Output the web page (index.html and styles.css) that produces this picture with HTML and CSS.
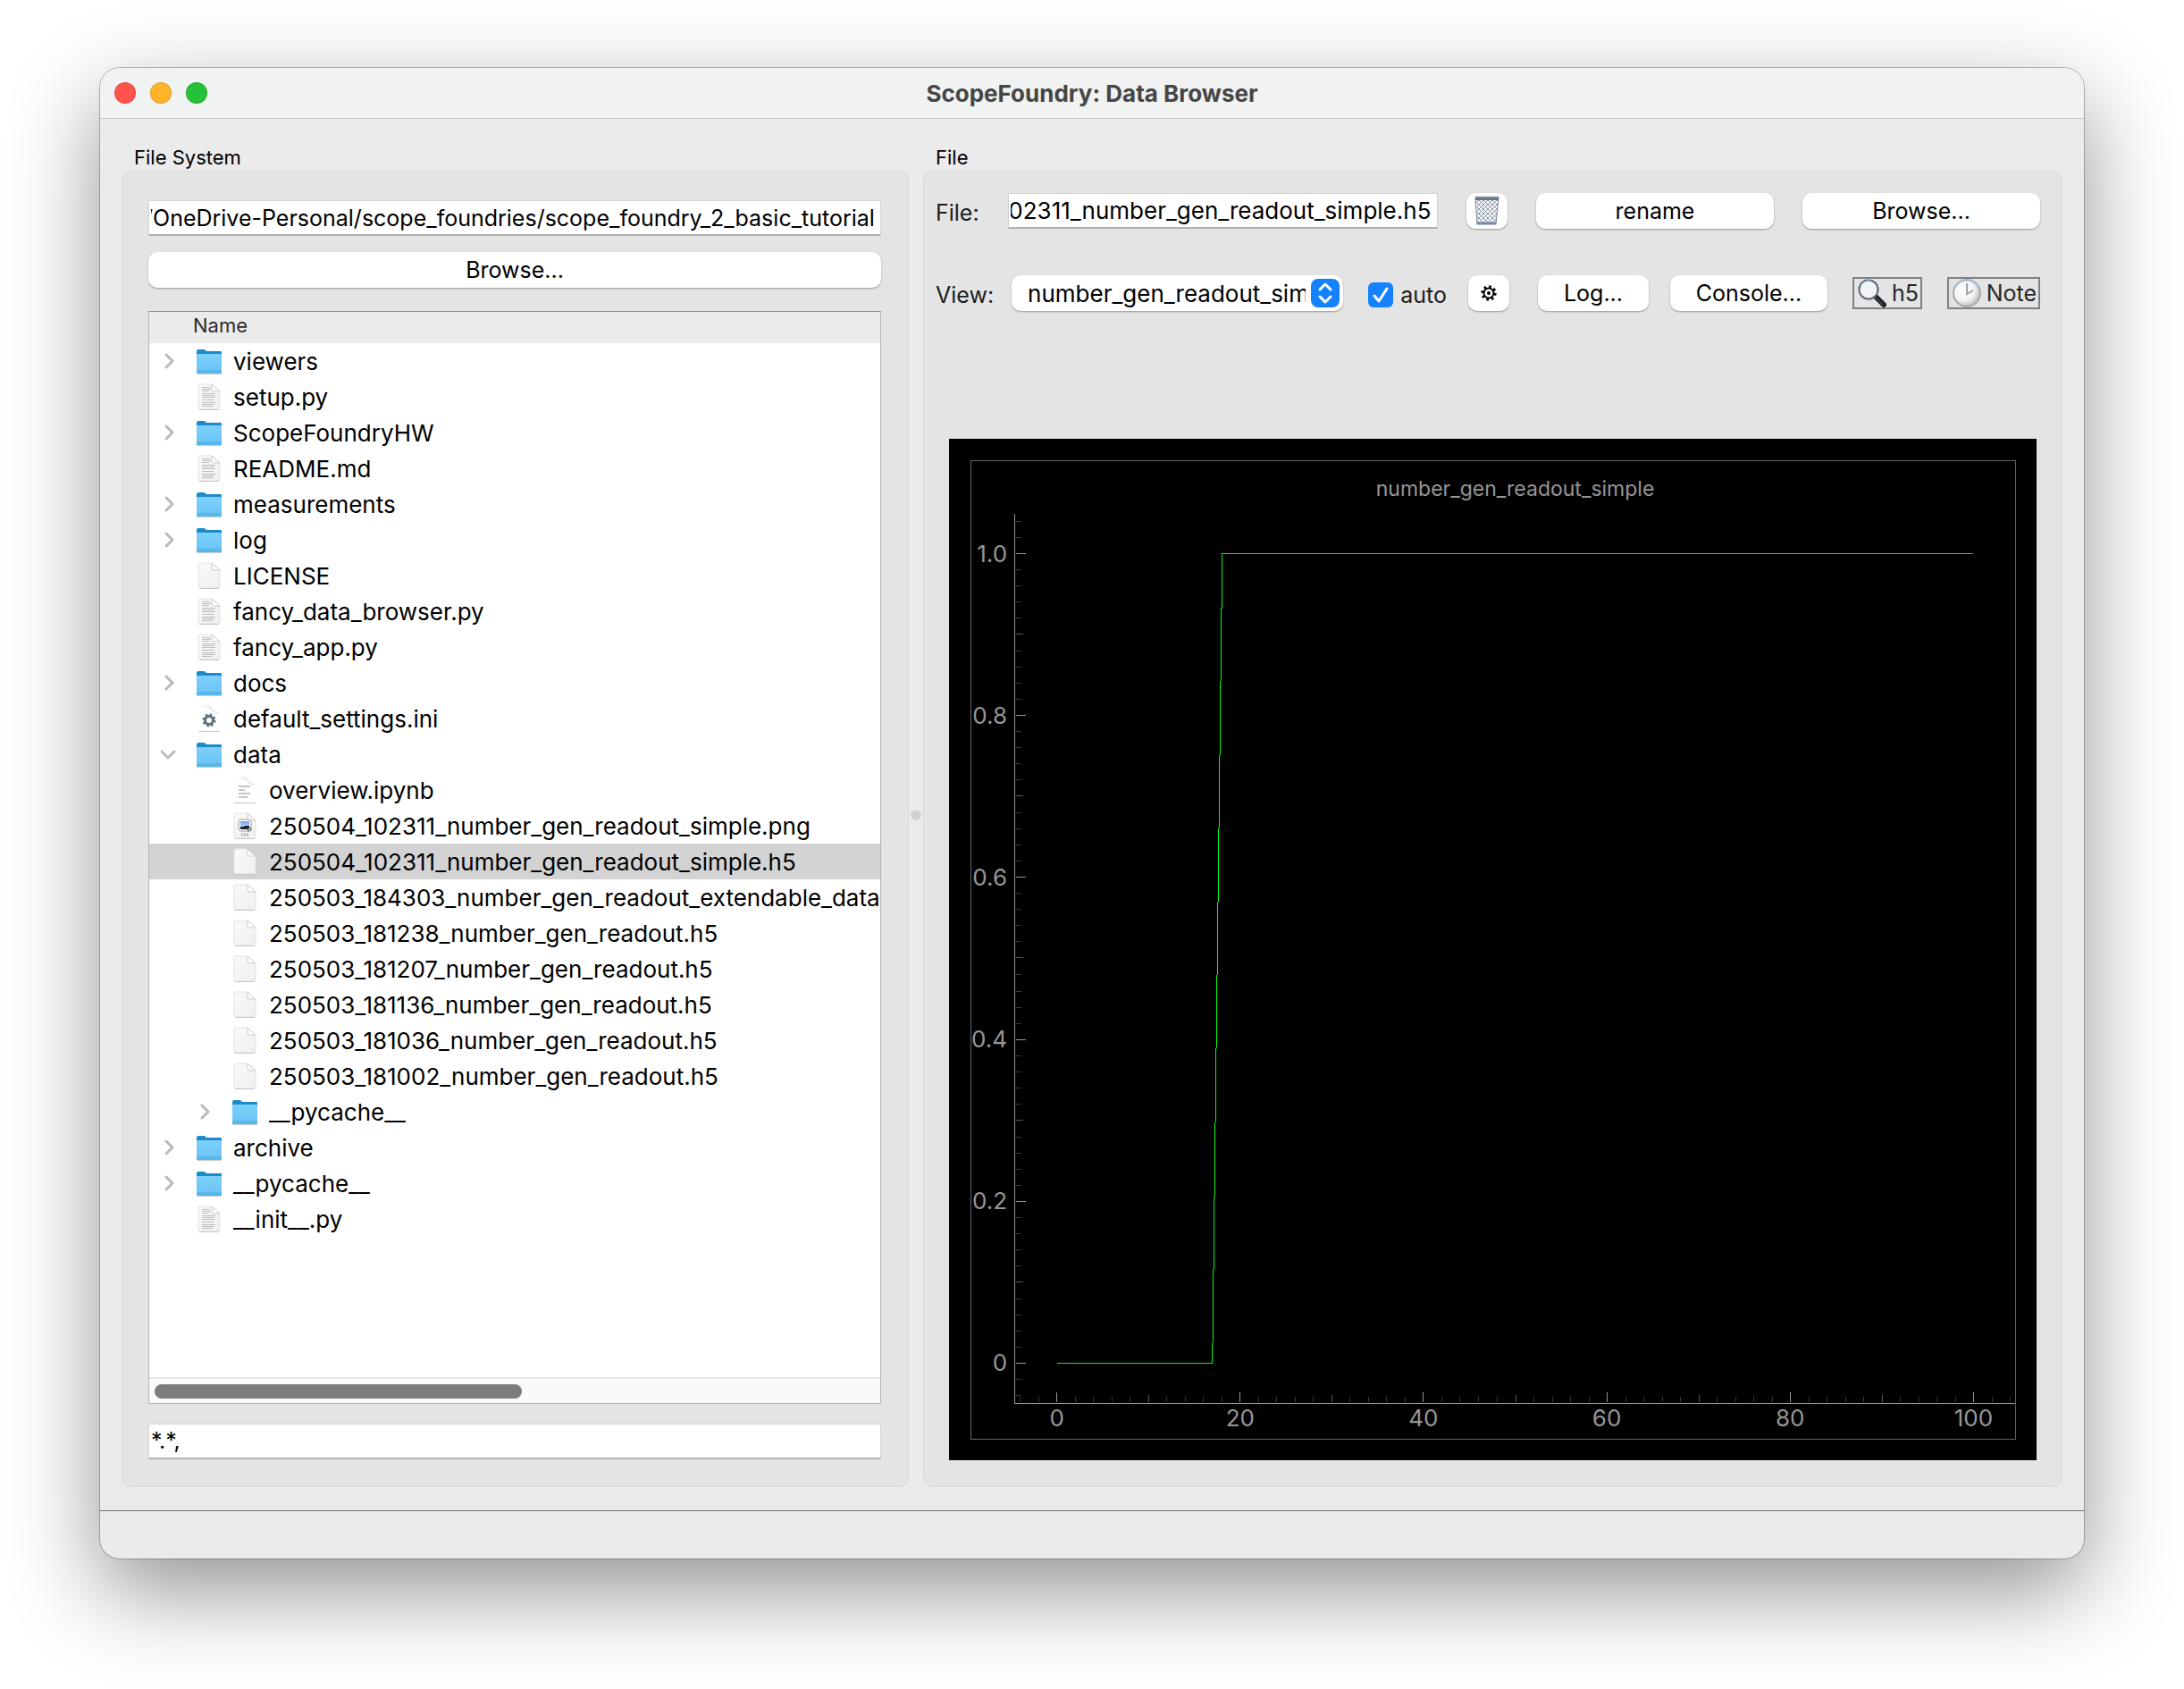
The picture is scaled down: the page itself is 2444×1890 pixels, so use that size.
FILE: index.html
```html
<!DOCTYPE html>
<html lang="en">
<head>
    <meta charset="UTF-8">
    <meta name="viewport" content="width=device-width, initial-scale=1.0">
    <title>ScopeFoundry: Data Browser</title>
    <link rel="stylesheet" href="styles.css">
</head>
<body>
    <!-- shared icons -->
    <svg class="defs" width="0" height="0" aria-hidden="true">
        <defs>
            <linearGradient id="folderFill" x1="0" y1="0" x2="0" y2="1">
                <stop offset="0" stop-color="#7dd0fb"/>
                <stop offset="1" stop-color="#68c3f3"/>
            </linearGradient>
            <linearGradient id="pageFill" x1="0" y1="0" x2="1" y2="1">
                <stop offset="0" stop-color="#fafafa"/>
                <stop offset="1" stop-color="#efefef"/>
            </linearGradient>
            <linearGradient id="pngFill" x1="0" y1="0" x2="0" y2="1">
                <stop offset="0" stop-color="#6f9df0"/>
                <stop offset="1" stop-color="#b5d3fa"/>
            </linearGradient>
            <radialGradient id="clockFill" cx="0.4" cy="0.4" r="0.65">
                <stop offset="0" stop-color="#ffffff"/>
                <stop offset="0.6" stop-color="#f3f3f3"/>
                <stop offset="1" stop-color="#b4b4b4"/>
            </radialGradient>
            <pattern id="mesh" width="5" height="5" patternUnits="userSpaceOnUse">
                <path d="M0 0L5 5M5 0L0 5" stroke="#8b95a3" stroke-width="1"/>
            </pattern>
            <symbol id="chevron" viewBox="0 0 20 20">
                <path d="M6 3l7 7-7 7" fill="none" stroke="#b9b9b9" stroke-width="3" stroke-linecap="round" stroke-linejoin="round"/>
            </symbol>
            <symbol id="chevron-down" viewBox="0 0 20 20">
                <path d="M1 7l7 7 7-7" fill="none" stroke="#b9b9b9" stroke-width="3" stroke-linecap="round" stroke-linejoin="round"/>
            </symbol>
            <symbol id="folder" viewBox="0 0 32 32">
                <rect x="2" y="28" width="28" height="3" rx="1" fill="#00000033"/>
                <path d="M2 5q0-2 2-2h6q1 0 2 1l1 1h16q1 0 1 1v10H2z" fill="#1a8ccb"/>
                <rect x="2" y="8" width="28" height="22" rx="1" fill="url(#folderFill)"/>
                <path d="M2 26h28v3q0 1-1 1H3q-1 0-1-1z" fill="#58b7ea"/>
            </symbol>
            <symbol id="page" viewBox="0 0 32 32">
                <path d="M6 2h13l9 8v18q0 2-2 2H6q-2 0-2-2V4q0-2 2-2z" fill="url(#pageFill)" stroke="#e2e2e2" stroke-width="1"/>
                <path d="M5 30.5h22" stroke="#c6c6c6" stroke-width="1"/>
                <path d="M19 2v6q0 2 2 2h7z" fill="#fdfdfd" stroke="#cccccc" stroke-width="1"/>
            </symbol>
            <symbol id="text" viewBox="0 0 32 32">
                <use href="#page"/>
                <path d="M8 5.5h9M8 7.5h10M8 9.5h8M8 12.5h15M8 14.5h14M8 16.5h15M8 19.5h13M8 22.5h15M8 24.5h14M8 26.5h12" fill="none" stroke="#bdbdbd" stroke-width="1"/>
            </symbol>
            <symbol id="settings" viewBox="0 0 32 32">
                <path d="M5 1h11l11 9z" fill="#f4f4f4"/>
                <path d="M17 2q1 7 9 8" fill="none" stroke="#dddddd" stroke-width="1"/>
                <path d="M4 30.5h24" stroke="#c4c4c4" stroke-width="1"/>
                <circle cx="16" cy="18" r="4.5" fill="none" stroke="#5e6e78" stroke-width="3"/>
                <circle cx="16" cy="18" r="6.5" fill="none" stroke="#5e6e78" stroke-width="2" stroke-dasharray="2.5 2.6"/>
            </symbol>
            <symbol id="notebook" viewBox="0 0 32 32">
                <path d="M5 1h11l11 9z" fill="#f4f4f4"/>
                <path d="M17 2q1 7 9 8" fill="none" stroke="#dddddd" stroke-width="1"/>
                <path d="M4 30.5h24" stroke="#c4c4c4" stroke-width="1"/>
                <path d="M9 12h13M9 16h7M9 20h13M9 24h10" stroke="#c6c6c6" stroke-width="2"/>
            </symbol>
            <symbol id="png" viewBox="0 0 32 32">
                <use href="#page"/>
                <rect x="9" y="9" width="14" height="13" rx="3" fill="#ffffff" stroke="#9a9a9a"/>
                <rect x="11" y="11" width="10" height="6" fill="url(#pngFill)"/>
                <path d="M11 17h4l1-1h5v4H11z" fill="#1c2433"/>
                <circle cx="21" cy="20" r="2" fill="none" stroke="#555555"/>
                <path d="M12 26h9" stroke="#b5b5b5" stroke-width="3" stroke-dasharray="2 1"/>
            </symbol>
        </defs>
    </svg>

    <div class="window">
        <header class="titlebar">
            <div class="lights">
                <button class="light close" aria-label="Close"></button>
                <button class="light minimize" aria-label="Minimize"></button>
                <button class="light zoom" aria-label="Zoom"></button>
            </div>
            <h1>ScopeFoundry: Data Browser</h1>
        </header>

        <main class="splitter">
            <section class="group file-system">
                <h2>File System</h2>
                <div class="box">
                    <input class="line-edit scroll-end" type="text" aria-label="Root folder" value="/OneDrive-Personal/scope_foundries/scope_foundry_2_basic_tutorial">
                    <button class="push">Browse...</button>

                    <div class="tree">
                        <div class="tree-header">Name</div>
                        <ul class="rows">
                            <li class="row"><button class="toggle" aria-label="Expand"><svg><use href="#chevron"/></svg></button><svg class="icon"><use href="#folder"/></svg>viewers</li>
                            <li class="row leaf"><svg class="icon"><use href="#text"/></svg>setup.py</li>
                            <li class="row"><button class="toggle" aria-label="Expand"><svg><use href="#chevron"/></svg></button><svg class="icon"><use href="#folder"/></svg>ScopeFoundryHW</li>
                            <li class="row leaf"><svg class="icon"><use href="#text"/></svg>README.md</li>
                            <li class="row"><button class="toggle" aria-label="Expand"><svg><use href="#chevron"/></svg></button><svg class="icon"><use href="#folder"/></svg>measurements</li>
                            <li class="row"><button class="toggle" aria-label="Expand"><svg><use href="#chevron"/></svg></button><svg class="icon"><use href="#folder"/></svg>log</li>
                            <li class="row leaf"><svg class="icon"><use href="#page"/></svg>LICENSE</li>
                            <li class="row leaf"><svg class="icon"><use href="#text"/></svg>fancy_data_browser.py</li>
                            <li class="row leaf"><svg class="icon"><use href="#text"/></svg>fancy_app.py</li>
                            <li class="row"><button class="toggle" aria-label="Expand"><svg><use href="#chevron"/></svg></button><svg class="icon"><use href="#folder"/></svg>docs</li>
                            <li class="row leaf"><svg class="icon"><use href="#settings"/></svg>default_settings.ini</li>
                            <li class="row"><button class="toggle" aria-label="Collapse"><svg><use href="#chevron-down"/></svg></button><svg class="icon"><use href="#folder"/></svg>data</li>
                            <li class="row leaf child"><svg class="icon"><use href="#notebook"/></svg>overview.ipynb</li>
                            <li class="row leaf child"><svg class="icon"><use href="#png"/></svg>250504_102311_number_gen_readout_simple.png</li>
                            <li class="row leaf child selected"><svg class="icon"><use href="#page"/></svg>250504_102311_number_gen_readout_simple.h5</li>
                            <li class="row leaf child"><svg class="icon"><use href="#page"/></svg>250503_184303_number_gen_readout_extendable_dataset.h5</li>
                            <li class="row leaf child"><svg class="icon"><use href="#page"/></svg>250503_181238_number_gen_readout.h5</li>
                            <li class="row leaf child"><svg class="icon"><use href="#page"/></svg>250503_181207_number_gen_readout.h5</li>
                            <li class="row leaf child"><svg class="icon"><use href="#page"/></svg>250503_181136_number_gen_readout.h5</li>
                            <li class="row leaf child"><svg class="icon"><use href="#page"/></svg>250503_181036_number_gen_readout.h5</li>
                            <li class="row leaf child"><svg class="icon"><use href="#page"/></svg>250503_181002_number_gen_readout.h5</li>
                            <li class="row child"><button class="toggle" aria-label="Expand"><svg><use href="#chevron"/></svg></button><svg class="icon"><use href="#folder"/></svg>__pycache__</li>
                            <li class="row"><button class="toggle" aria-label="Expand"><svg><use href="#chevron"/></svg></button><svg class="icon"><use href="#folder"/></svg>archive</li>
                            <li class="row"><button class="toggle" aria-label="Expand"><svg><use href="#chevron"/></svg></button><svg class="icon"><use href="#folder"/></svg>__pycache__</li>
                            <li class="row leaf"><svg class="icon"><use href="#text"/></svg>__init__.py</li>
                        </ul>
                        <div class="scrollbar"><div class="thumb"></div></div>
                    </div>

                    <input class="line-edit" type="text" aria-label="File filter" value="*.*,">
                </div>
            </section>

            <div class="handle"></div>

            <section class="group file">
                <h2>File</h2>
                <div class="box">
                    <div class="toolbar">
                        <label for="fileName">File:</label>
                        <input class="line-edit scroll-end" id="fileName" type="text" value="250504_102311_number_gen_readout_simple.h5">
                        <button class="push square" aria-label="Delete">
                            <svg width="28" height="34" viewBox="0 0 28 34">
                                <path d="M1 2h26l-3 30H3z" fill="#f6f8fb"/>
                                <path d="M1 2h26l-3 30H3z" fill="url(#mesh)"/>
                                <path d="M1 2l2 30M27 2l-3 30" stroke="#7d8794" stroke-width="1"/>
                                <path d="M1 3h26" stroke="#6b7480" stroke-width="4"/>
                                <path d="M1 1h26" stroke="#b9cbe2" stroke-width="1"/>
                                <path d="M3 31h21" stroke="#7488a5" stroke-width="3"/>
                            </svg>
                        </button>
                        <button class="push wide">rename</button>
                        <button class="push wide">Browse...</button>
                    </div>
                    <div class="toolbar view-bar">
                        <label for="view">View:</label>
                        <div class="combo">
                            <select id="view">
                                <option>number_gen_readout_simple</option>
                            </select>
                            <svg width="32" height="32" viewBox="0 0 32 32" aria-hidden="true">
                                <rect width="32" height="32" rx="8" fill="#1481ff"/>
                                <path d="M10 12l6-6 6 6M10 20l6 6 6-6" fill="none" stroke="#ffffff" stroke-width="3" stroke-linecap="round" stroke-linejoin="round"/>
                            </svg>
                        </div>
                        <label class="auto"><input type="checkbox" checked>auto</label>
                        <button class="push square" aria-label="Settings">
                            <svg width="18" height="18" viewBox="0 0 18 18">
                                <circle cx="9" cy="9" r="5.5" fill="none" stroke="#000000" stroke-width="2"/>
                                <circle cx="9" cy="9" r="7.2" fill="none" stroke="#000000" stroke-width="3" stroke-dasharray="2.6 3.05"/>
                                <circle cx="9" cy="9" r="2" fill="#000000"/>
                            </svg>
                        </button>
                        <button class="push log">Log...</button>
                        <button class="push console">Console...</button>
                        <button class="flat h5">
                            <svg width="32" height="32" viewBox="0 0 32 32">
                                <path d="M20 20l9 9" stroke="#1d2126" stroke-width="6" stroke-linecap="round"/>
                                <path d="M20 21l8 8" stroke="#5b6570" stroke-width="1"/>
                                <circle cx="12" cy="12" r="10.5" fill="#f1f4f6" stroke="#5c6673" stroke-width="2"/>
                                <path d="M3 8a10.5 10.5 0 0 1 12-6" fill="none" stroke="#8fb2e0" stroke-width="1"/>
                            </svg>
                            h5
                        </button>
                        <button class="flat note">
                            <svg width="32" height="32" viewBox="0 0 32 32">
                                <circle cx="16" cy="16" r="15" fill="url(#clockFill)" stroke="#a4a8ae" stroke-width="2"/>
                                <path d="M3 9a15 15 0 0 1 26 0" fill="none" stroke="#a9bbd6" stroke-width="2"/>
                                <path d="M16 5v12l7-4" fill="none" stroke="#a0a4a8" stroke-width="2"/>
                            </svg>
                            Note
                        </button>
                    </div>

                    <svg class="plot" id="plot" viewBox="0 0 1216 1142" role="img" aria-label="number_gen_readout_simple">
                        <rect width="1216" height="1142" fill="#000000"/>
                        <rect class="frame" x="24.5" y="24.5" width="1168" height="1094"/>
                        <text class="plot-title" x="633" y="64">number_gen_readout_simple</text>
                        <path class="axis" d="M73.5 84V1078.5H1192"/>
                        <g id="ticks"></g>
                        <path class="curve" id="curve"/>
                    </svg>
                </div>
            </section>
        </main>

        <footer class="statusbar"></footer>
    </div>

    <script src="script.js"></script>
</body>
</html>
```
FILE: styles.css
```css
* {
    box-sizing: border-box;
}
body {
    display: flex;
    min-height: 100vh;
    margin: 0;
    padding: 76px 112px 147px;
    background: #ffffff;
    color: #000000;
    font-family: Inter, 'Liberation Sans', sans-serif;
    font-size: 25px;
}
button, input, select {
    margin: 0;
    font: inherit;
    color: inherit;
}
h1, h2 {
    margin: 0;
}
.defs {
    position: absolute;
}
.window {
    flex: 1;
    display: flex;
    flex-direction: column;
    min-width: 0;
    border-radius: 22px;
    background: #ebebeb;
    box-shadow: 0 0 0 1px rgba(0,0,0,0.25), 0 36px 100px rgba(0,0,0,0.43);
    overflow: hidden;
}

/* title bar */
.titlebar {
    display: grid;
    grid-template-columns: 1fr auto 1fr;
    align-items: center;
    height: 57px;
    padding: 0 16px;
    border-bottom: 1px solid #c4c5c4;
    background: #f0f3f1;
}
.titlebar h1 {
    color: #454645;
    font-size: 26px;
    font-weight: 700;
}
.lights {
    display: flex;
    gap: 16px;
}
.light {
    width: 24px;
    height: 24px;
    padding: 0;
    border: 1px solid rgba(0,0,0,0.12);
    border-radius: 50%;
}
.close {
    background: #ff544d;
}
.minimize {
    background: #ffb429;
}
.zoom {
    background: #25c138;
}

/* panels */
.splitter {
    flex: 1;
    display: flex;
    min-height: 0;
    padding: 28px 24px 26px;
}
.group {
    display: flex;
    flex-direction: column;
    min-width: 0;
}
.file-system {
    flex: 881;
}
.file {
    flex: 1275;
}
.group h2 {
    padding-left: 14px;
    font-size: 22px;
    font-weight: 400;
    line-height: 30px;
}
.box {
    flex: 1;
    display: flex;
    flex-direction: column;
    min-height: 0;
    border: 1px solid #d9d9d9;
    border-radius: 10px;
    background: #e4e4e4;
}
.handle {
    align-self: center;
    width: 12px;
    height: 12px;
    margin: 0 2px;
    border: 1px solid #d9d9d9;
    border-radius: 50%;
    background: #d0d0d0;
}

/* controls */
.line-edit {
    width: 100%;
    height: 40px;
    padding: 0 6px 0 2px;
    border: 1px solid #d2d2d2;
    border-bottom: 2px solid #b0b0b0;
    background: #ffffff;
    outline: none;
}
.push {
    height: 40px;
    padding: 0;
    border: none;
    border-radius: 10px;
    background: #ffffff;
    box-shadow: 0 1px 2px rgba(0,0,0,0.35);
    line-height: 38px;
}
.flat {
    display: flex;
    align-items: center;
    justify-content: space-between;
    height: 36px;
    padding: 0 2px 0 4px;
    border: 2px solid #808080;
    background: transparent;
    color: #262626;
}

/* file tree */
.file-system .box {
    padding: 32px 30px 30px 29px;
}
.file-system .push {
    margin: 18px 0 26px;
}
.tree {
    flex: 1;
    display: flex;
    flex-direction: column;
    min-height: 0;
    margin-bottom: 22px;
    border: 1px solid #b4b4b4;
    border-top-color: #8c8c8c;
    background: #ffffff;
}
.tree-header {
    height: 35px;
    padding-left: 49px;
    background: #ebebeb;
    color: #2c2c2c;
    font-size: 22px;
    line-height: 30px;
}
.rows {
    flex: 1;
    min-height: 0;
    margin: 0;
    padding: 0;
    font-size: 26px;
    list-style: none;
    overflow: hidden;
}
.row {
    display: flex;
    align-items: center;
    height: 40px;
    padding-left: 13px;
    white-space: nowrap;
}
.leaf {
    padding-left: 51px;
}
.child {
    padding-left: 53px;
}
.leaf.child {
    padding-left: 91px;
}
.selected {
    background: #d3d3d3;
}
.icon {
    flex: none;
    width: 32px;
    height: 32px;
    margin-right: 11px;
}
.toggle {
    width: 38px;
    height: 20px;
    padding: 0;
    border: none;
    background: none;
    text-align: left;
}
.toggle svg {
    display: block;
    width: 20px;
    height: 20px;
}
.scrollbar {
    height: 29px;
    padding: 6px;
    border-top: 2px solid #e6e6e6;
    background: #fafafa;
}
.thumb {
    width: 51%;
    height: 16px;
    border-radius: 8px;
    background: #7d7d7d;
}

/* file view */
.file .box {
    padding: 24px 24px 29px 13px;
}
.toolbar {
    display: flex;
    align-items: center;
    gap: 32px;
    height: 40px;
}
.toolbar label {
    padding-top: 3px;
    color: #1c1c1c;
}
.toolbar .line-edit {
    flex: 1;
    min-width: 0;
    font-size: 26px;
}
.square {
    display: flex;
    align-items: center;
    justify-content: center;
    width: 46px;
}
.wide {
    width: 266px;
}
.view-bar {
    gap: 24px;
    margin: 52px 0 143px;
}
.view-bar label:first-child {
    margin-right: -4px;
}
.combo {
    position: relative;
    flex: 1;
    min-width: 0;
}
.combo select {
    display: block;
    appearance: none;
    width: 100%;
    height: 40px;
    padding: 0 42px 0 18px;
    border: none;
    border-radius: 10px;
    background: #ffffff;
    box-shadow: 0 1px 2px rgba(0,0,0,0.35);
    font-size: 26px;
    outline: none;
}
.combo svg {
    position: absolute;
    top: 4px;
    right: 4px;
    pointer-events: none;
}
.auto {
    display: flex;
    align-items: center;
    gap: 8px;
    margin-left: 4px;
}
.auto input {
    appearance: none;
    width: 28px;
    height: 28px;
    border-radius: 6px;
    background: #1481ff url("data:image/svg+xml,%3Csvg xmlns='http://www.w3.org/2000/svg' viewBox='0 0 28 28'%3E%3Cpath d='M7 15l5 6 9-14' fill='none' stroke='white' stroke-width='3' stroke-linecap='round' stroke-linejoin='round'/%3E%3C/svg%3E");
}
.log {
    width: 124px;
    margin-left: 8px;
}
.console {
    width: 176px;
}
.h5 {
    width: 78px;
    margin: 0 4px;
}
.note {
    width: 104px;
}

/* plot */
.plot {
    flex: 1;
    min-height: 0;
    margin: 0 4px 0 15px;
}
.plot path, .plot rect {
    shape-rendering: crispEdges;
}
.plot text {
    fill: #969696;
    font-size: 26px;
    text-anchor: middle;
}
.plot .plot-title {
    font-size: 23px;
}
.plot .tick-y {
    text-anchor: end;
}
.frame {
    fill: none;
    stroke: #646464;
}
.axis, .major {
    fill: none;
    stroke: #969696;
}
.mid {
    stroke: #5a5a5a;
}
.minor {
    stroke: #373737;
}
.curve {
    fill: none;
    stroke: #00ff00;
}

.statusbar {
    height: 54px;
    border-top: 1px solid #6e6e6e;
}
```
FILE: script.js
```js
const SVG_NS = 'http://www.w3.org/2000/svg';
const ticks = document.getElementById('ticks');

// data to plot coordinates
const px = v => 120 + Math.round(v * 10.25) + 0.5;
const py = v => 1033 - Math.round(v * 905) + 0.5;

function addTick(d, level) {
    const path = document.createElementNS(SVG_NS, 'path');
    path.setAttribute('d', d);
    path.setAttribute('class', level);
    ticks.appendChild(path);
}

function addLabel(text, x, y, className) {
    const label = document.createElementNS(SVG_NS, 'text');
    label.setAttribute('x', x);
    label.setAttribute('y', y);
    label.setAttribute('class', className);
    label.textContent = text;
    ticks.appendChild(label);
}

const lengths = { major: 11, mid: 8, minor: 6 };

function levelOf(i) {
    if (i % 10 === 0) return 'major';
    return i % 5 === 0 ? 'mid' : 'minor';
}

for (let i = -2; i <= 52; i++) {
    const level = levelOf(i);
    const x = px(i * 2);
    addTick(`M${x} 1077v-${lengths[level]}`, level);
    if (level === 'major') addLabel(i * 2, x, 1104, 'tick-x');
}

for (let i = -2; i <= 52; i++) {
    const level = levelOf(i);
    const y = py(i * 0.02);
    addTick(`M75 ${y}h${lengths[level]}`, level);
    if (level === 'major') addLabel(i === 0 ? '0' : (i * 0.02).toFixed(1), 65, y + 9, 'tick-y');
}

// readout values: 0 up to sample 17, 1 from sample 18
document.getElementById('curve').setAttribute('d', `M${px(0)} ${py(0)}H${px(17)}L${px(18)} ${py(1)}H${px(100)}`);

// long paths show their end
document.querySelectorAll('.scroll-end').forEach(input => {
    input.scrollLeft = input.scrollWidth;
});
```
